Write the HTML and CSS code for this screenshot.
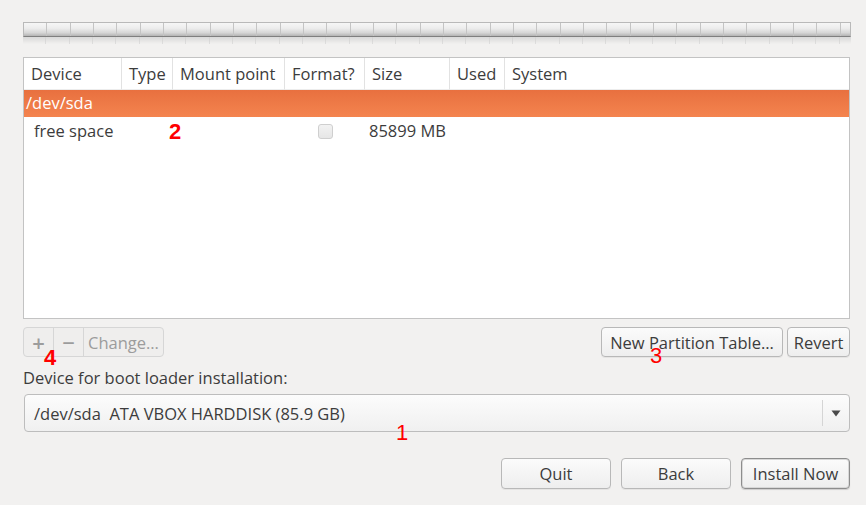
FILE: index.html
```html
<!DOCTYPE html>
<html>
<head>
<meta charset="utf-8">
<link rel="stylesheet" href="styles.css">
</head>
<body>
<div class="page">
  <div class="progress"><div class="progress-bar"></div><div class="progress-reflect"></div></div>

  <div class="table">
    <div class="row head">
      <div class="cell">Device</div>
      <div class="cell">Type</div>
      <div class="cell">Mount point</div>
      <div class="cell">Format?</div>
      <div class="cell">Size</div>
      <div class="cell">Used</div>
      <div class="cell last">System</div>
    </div>
    <div class="row sel">
      <div class="cell dev">/dev/sda</div>
    </div>
    <div class="row item">
      <div class="cell indent">free space</div>
      <div class="cell"></div>
      <div class="cell"></div>
      <div class="cell center"><span class="check"></span></div>
      <div class="cell size">85899 MB</div>
      <div class="cell"></div>
      <div class="cell"></div>
    </div>
    <span class="mark bold m2">2</span>
  </div>

  <div class="toolbar">
    <div class="group">
      <span class="gbtn sym">+</span>
      <span class="gbtn sym">−</span>
      <span class="gbtn text">Change…</span>
    </div>
    <div class="right">
      <span class="btn npt">New Partition Table…</span>
      <span class="btn rev">Revert</span>
    </div>
    <span class="mark bold m4">4</span>
    <span class="mark m3">3</span>
  </div>

  <div class="label">Device for boot loader installation:</div>

  <div class="combo">
    <span class="combo-text">/dev/sda&nbsp; ATA VBOX HARDDISK (85.9 GB)</span>
    <span class="combo-arrow"><svg width="10" height="7" viewBox="0 0 10 7"><path d="M0.5 0.5 L9.5 0.5 L5 6.5 Z" fill="#4a4a4a"/></svg></span>
    <span class="mark m1">1</span>
  </div>

  <div class="footer">
    <span class="btn fbtn">Quit</span>
    <span class="btn fbtn">Back</span>
    <span class="btn fbtn default">Install Now</span>
  </div>
</div>
</body>
</html>
```
FILE: styles.css
```css
* { box-sizing: border-box; }
html, body { margin: 0; padding: 0; }
body {
  background: #f2f1f0;
  font-family: "Open Sans", "DejaVu Sans", sans-serif;
  font-size: 16.5px;
  color: #3c3c3c;
  width: 866px;
  height: 505px;
  overflow: hidden;
}
.page {
  padding: 22px 16px 0 23px;
  display: flex;
  flex-direction: column;
}
.progress { height: 35px; }
.progress-bar {
  height: 15px;
  width: 828px;
  border: 1px solid #b9b9b9;
  border-bottom: 1px solid #7f7f7f;
  background:
    repeating-linear-gradient(to right, transparent 0, transparent 22.3px, #c4c4c4 22.3px, #c4c4c4 23.33px),
    linear-gradient(to bottom, #f6f6f6 0%, #ededed 40%, #d6d6d6 75%, #b4b4b4 100%);
}
.progress-reflect {
  height: 7px;
  width: 828px;
  background:
    repeating-linear-gradient(to right, transparent 0, transparent 22.3px, rgba(200,200,200,0.6) 22.3px, rgba(200,200,200,0.6) 23.33px),
    linear-gradient(to bottom, #d4d4d4, #f2f1f0);
  opacity: 0.8;
}
.table {
  position: relative;
  width: 827px;
  height: 262px;
  background: #fff;
  border: 1px solid #c3c3c3;
}
.row {
  display: grid;
  grid-template-columns: 98px 51px 112px 80px 85px 55px 1fr;
}
.head { height: 32px; }
.head .cell {
  border-right: 1px solid #e2e2e2;
  padding-left: 7px;
  line-height: 31px;
  border-bottom: 1px solid #ececec;
  white-space: nowrap;
}
.head .cell.last { border-right: none; }
.sel {
  height: 27px;
  display: flex;
  background: linear-gradient(to bottom, #e8703f, #f4844f);
  color: #fff;
}
.sel .dev { padding-left: 2px; line-height: 26px; }
.item { height: 28px; line-height: 28px; white-space: nowrap; }
.item .indent { padding-left: 10px; }
.item .size { padding-left: 4px; }
.center { display: flex; justify-content: center; align-items: center; }
.check {
  width: 15px;
  height: 15px;
  border: 1px solid #cfcfcf;
  border-radius: 3px;
  background: linear-gradient(#f2f2f2, #e6e6e6);
}
.toolbar {
  position: relative;
  margin-top: 8px;
  display: flex;
  justify-content: space-between;
  width: 827px;
}
.group {
  display: flex;
  height: 30px;
  border: 1px solid #d6d6d6;
  border-radius: 4px;
  background: #efeeed;
}
.gbtn {
  color: #9c9c9c;
  display: flex;
  align-items: center;
  justify-content: center;
  border-right: 1px solid #d6d6d6;
}
.gbtn.sym { width: 30px; font-size: 22px; font-weight: 600; }
.gbtn.text { width: 79px; border-right: none; padding-top: 1px; }
.right { display: flex; gap: 4px; }
.btn {
  display: flex;
  align-items: center;
  justify-content: center;
  height: 30px;
  border: 1px solid #b8b8b8;
  border-radius: 4px;
  background: linear-gradient(to bottom, #fbfbfb, #eeeeee);
  box-shadow: 0 1px 0 rgba(0,0,0,0.05);
  color: #3c3c3c;
  white-space: nowrap;
}
.npt { width: 182px; }
.rev { width: 63px; }
.label { margin-top: 10px; line-height: 22px; }
.combo {
  position: relative;
  margin-top: 5px;
  width: 826px;
  height: 38px;
  margin-left: 1px;
  border: 1px solid #bdbdbd;
  border-radius: 4px;
  background: linear-gradient(to bottom, #fcfcfc, #f0f0f0);
  display: flex;
  align-items: center;
}
.combo-text { flex: 1; padding-left: 9px; white-space: nowrap; }
.combo-arrow {
  width: 27px;
  height: 26px;
  border-left: 1px solid #d5d5d5;
  display: flex;
  align-items: center;
  justify-content: center;
}
.footer {
  margin-top: 26px;
  width: 827px;
  display: flex;
  justify-content: flex-end;
  gap: 10px;
}
.fbtn { width: 110px; height: 31px; }
.fbtn.default {
  width: 109px;
  border: 1px solid #8d8d8d;
  box-shadow: inset 0 0 0 1px #d8d8d8, 0 1px 1px rgba(0,0,0,0.15);
}
.mark {
  position: absolute;
  color: #ff0000;
  font-family: "Liberation Sans", sans-serif;
  font-size: 22px;
  line-height: 22px;
}
.mark.bold { font-weight: bold; }
.m2 { left: 145px; top: 63px; }
.m4 { left: 21px; top: 20px; }
.m3 { left: 627px; top: 18px; }
.m1 { left: 371px; top: 27px; }
```
